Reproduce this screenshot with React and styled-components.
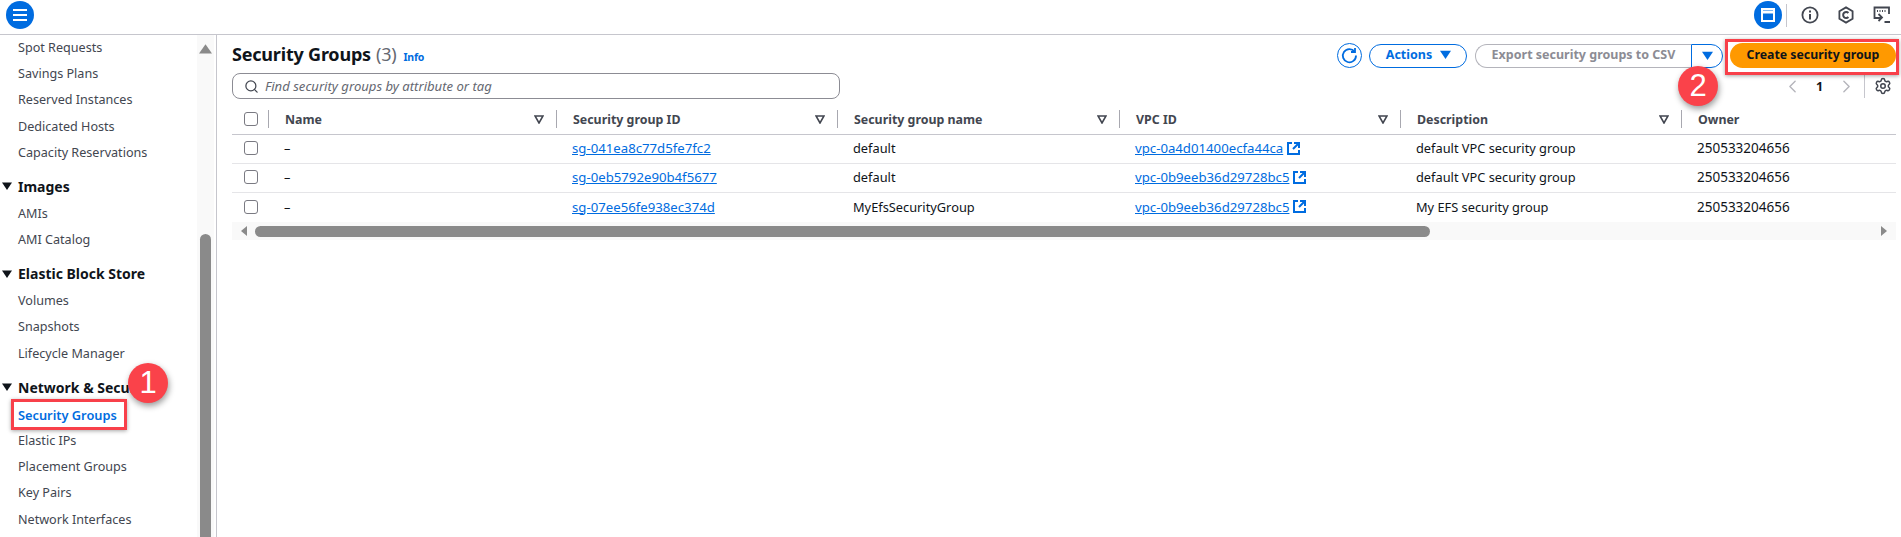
import React from "react";
import styled, { createGlobalStyle } from "styled-components";
import { Settings, Search, ChevronLeft, ChevronRight } from "lucide-react";

const Global = createGlobalStyle`
  html, body { margin: 0; padding: 0; height: 537px; overflow: hidden; background: #fff; }
  body { font-family: "Noto Sans", "Open Sans", sans-serif; font-size: 13px; color: #0f141a; }
  * { box-sizing: border-box; }
`;

const Page = styled.div`
  position: relative;
  width: 1901px;
  height: 537px;
  overflow: hidden;
  display: flex;
  flex-direction: column;
`;

const TopBar = styled.header`
  height: 35px;
  flex: none;
  display: flex;
  align-items: flex-start;
  justify-content: space-between;
  padding: 1px 5px 0 6px;
  border-bottom: 1px solid #c6c6cd;
`;

const RoundButton = styled.button`
  width: 28px;
  height: 28px;
  padding: 0;
  border: none;
  border-radius: 50%;
  background: #006ce0;
  display: flex;
  align-items: center;
  justify-content: center;
  color: #fff;
`;

const TopRight = styled.div`
  display: flex;
  align-items: center;
  height: 28px;
`;

const TopDivider = styled.span`
  width: 1px;
  height: 23px;
  margin: 0 14px 0 4px;
  background: #c6c6cd;
`;

const TopIcon = styled.svg`
  width: 18px;
  height: 18px;
  margin-right: 18px;
  color: #424650;
  fill: none;
  stroke: currentColor;
  stroke-width: 1.8;
  &:last-child { margin-right: 5px; }
`;

const Body = styled.div`
  flex: 1;
  display: flex;
  min-height: 0;
`;

const Sidebar = styled.aside`
  width: 217px;
  flex: none;
  display: flex;
  border-right: 1px solid #c6c6cd;
  overflow: hidden;
`;

const NavList = styled.nav`
  width: 197px;
  flex: none;
  white-space: nowrap;
  overflow: hidden;
`;

const NavItem = styled.div`
  height: 26.2px;
  line-height: 26px;
  padding-left: 18px;
  color: ${(p) => (p.$active ? "#006ce0" : "#424650")};
  font-weight: ${(p) => (p.$active ? 600 : 400)};
  font-size: ${(p) => (p.$active ? 12.8 : 12.6)}px;
`;

const NavHead = styled.div`
  height: 26.2px;
  margin-top: 8.8px;
  padding-bottom: 3px;
  display: flex;
  align-items: center;
  gap: 6px;
  padding-left: 2px;
  font-size: 14px;
  font-weight: 700;
  color: #0f141a;
`;

const Caret = styled.svg`
  flex: none;
  width: ${(p) => p.$size || 10}px;
  height: ${(p) => p.$size || 10}px;
  fill: currentColor;
`;

const VTrack = styled.div`
  position: relative;
  width: 17px;
  flex: none;
  margin-right: 2px;
  background: #f9f9f9;
  display: flex;
  flex-direction: column;
  align-items: center;
  color: #8a8a8a;
  padding-top: 8px;
`;

const VThumb = styled.div`
  width: 11px;
  margin-top: auto;
  height: 303px;
  border-radius: 6px 6px 0 0;
  background: #8a8a8a;
`;

const Main = styled.main`
  flex: 1;
  min-width: 0;
  padding: 8px 5px 0 15px;
  display: flex;
  flex-direction: column;
`;

const HeadRow = styled.div`
  height: 25px;
  display: flex;
  align-items: center;
  justify-content: space-between;
`;

const Title = styled.h1`
  margin: 0;
  padding-bottom: 4px;
  font-size: 18px;
  font-weight: 700;
  letter-spacing: -0.2px;
  color: #0f141a;
  display: flex;
  align-items: baseline;
  gap: 5px;
`;

const Count = styled.span`
  font-weight: 400;
  color: #656871;
`;

const InfoLink = styled.a`
  font-size: 10.5px;
  font-weight: 700;
  margin-left: 2px;
  color: #006ce0;
`;

const Actions = styled.div`
  display: flex;
  align-items: center;
`;

const RefreshButton = styled.button`
  width: 25px;
  height: 25px;
  padding: 0;
  margin-right: 7px;
  background: #fff;
  border: 1.5px solid #006ce0;
  border-radius: 50%;
  color: #006ce0;
  display: flex;
  align-items: center;
  justify-content: center;
`;

const PillButton = styled.button`
  height: 24px;
  padding: 0 0 2px 1px;
  font: 700 12.5px "Noto Sans", sans-serif;
  background: #fff;
  color: #006ce0;
  border: 1.5px solid #006ce0;
  border-radius: 13px;
  display: flex;
  align-items: center;
  gap: 8px;
  width: 98px;
  justify-content: center;
  margin-right: 8px;
`;

const SplitLeft = styled.button`
  width: 216px;
  height: 24px;
  padding: 0 0 2px;
  font: 700 12.5px "Noto Sans", sans-serif;
  color: #8c8c94;
  background: #fff;
  border: 1.5px solid #b4b4bb;
  border-right: none;
  border-radius: 13px 0 0 13px;
`;

const SplitRight = styled.button`
  width: 32px;
  height: 24px;
  padding: 0;
  background: #fff;
  color: #006ce0;
  border: 1.5px solid #006ce0;
  border-radius: 0 13px 13px 0;
  display: flex;
  align-items: center;
  justify-content: center;
  margin-right: 7px;
`;

const PrimaryButton = styled.button`
  width: 166px;
  height: 25px;
  padding: 0 0 2px;
  font: 700 12.3px "Noto Sans", sans-serif;
  color: #0f141a;
  background: #ff9900;
  border: none;
  border-radius: 13px;
`;

const SearchRow = styled.div`
  height: 26px;
  margin-top: 5px;
  display: flex;
  align-items: center;
  justify-content: space-between;
`;

const SearchBox = styled.div`
  width: 608px;
  height: 26px;
  border: 1px solid #8c8c94;
  border-radius: 8px;
  display: flex;
  align-items: center;
  gap: 6px;
  padding-left: 11px;
  color: #424650;
`;

const Placeholder = styled.span`
  font-style: italic;
  font-size: 13.1px;
  color: #656871;
`;

const Pager = styled.div`
  display: flex;
  align-items: center;
  height: 23px;
  color: #b4b4bb;
`;

const PageNumber = styled.span`
  width: 33px;
  text-align: center;
  font-weight: 700;
  font-size: 12.5px;
  color: #0f141a;
`;

const PagerDivider = styled.span`
  width: 1px;
  height: 23px;
  margin: 0 9px 0 7px;
  background: #c6c6cd;
`;

const GearBox = styled.span`
  display: flex;
  color: #424650;
  margin-right: 4px;
`;

const columns = "36px 288px 281px 282px 281px 281px 1fr";

const TableHead = styled.div`
  margin-top: 5px;
  height: 31px;
  display: grid;
  grid-template-columns: ${columns};
  align-items: center;
  border-bottom: 1.5px solid #c6c6cd;
`;

const HeadCell = styled.div`
  height: 18px;
  display: flex;
  align-items: center;
  justify-content: space-between;
  padding: 0 12px 0 16px;
  font-weight: 700;
  font-size: 12.4px;
  color: #424650;
  border-left: 1px solid #a8a8b0;
`;

const Row = styled.div`
  height: 29px;
  display: grid;
  grid-template-columns: ${columns};
  align-items: center;
  padding-bottom: 2px;
  border-bottom: ${(p) => (p.$last ? "none" : "1px solid #e5e5e8")};
`;

const Cell = styled.div`
  padding-left: 16px;
  font-size: 12.8px;
  color: #0f141a;
  white-space: nowrap;
  display: flex;
  align-items: center;
`;

const OwnerCell = styled(Cell)`
  font-size: 13.5px;
`;

const CheckCell = styled.div`
  padding-left: 12px;
  display: flex;
  align-items: center;
`;

const Check = styled.span`
  width: 14px;
  height: 14px;
  border: 1.5px solid #7a7a82;
  border-radius: 3px;
  background: #fff;
`;

const Link = styled.a`
  color: #006ce0;
  text-decoration: underline;
  font-size: 13.2px;
  display: inline-flex;
  align-items: center;
  gap: 4px;
`;

const HScroll = styled.div`
  height: 18px;
  background: #f9f9f9;
  display: flex;
  align-items: center;
  color: #8a8a8a;
  padding: 0 7px;
`;

const HThumb = styled.div`
  width: 1175px;
  height: 11px;
  margin-left: 6px;
  margin-right: auto;
  border-radius: 6px;
  background: #8a8a8a;
`;

const RedBox = styled.div`
  position: absolute;
  left: ${(p) => p.$x}px;
  top: ${(p) => p.$y}px;
  width: ${(p) => p.$w}px;
  height: ${(p) => p.$h}px;
  border: 3px solid #f8404a;
  box-shadow: 0 1px 4px rgba(0, 0, 0, 0.35);
`;

const Badge = styled.div`
  position: absolute;
  left: ${(p) => p.$x}px;
  top: ${(p) => p.$y}px;
  width: 40px;
  height: 40px;
  border-radius: 50%;
  background: #fa424a;
  color: #fff;
  font: 400 31px "Liberation Sans", sans-serif;
  display: flex;
  align-items: center;
  justify-content: center;
  box-shadow: 1px 3px 6px rgba(0, 0, 0, 0.4);
`;

const Tri = ({ dir = "down", size = 10 }) => (
  <Caret viewBox="0 0 10 10" $size={size}>
    {dir === "down" && <path d="M0 1.5h10L5 9z" />}
    {dir === "up" && <path d="M0 8h10L5 1z" />}
    {dir === "left" && <path d="M8 0v10L2 5z" />}
    {dir === "right" && <path d="M2 0v10l6-5z" />}
  </Caret>
);

const FilterIcon = () => (
  <svg width="10" height="9" viewBox="0 0 10 9" fill="none" stroke="#424650" strokeWidth="1.6">
    <path d="M1 1h8L5 8z" />
  </svg>
);

const External = () => (
  <svg width="13" height="13" viewBox="0 0 13 13" fill="none" stroke="#006ce0" strokeWidth="2">
    <path d="M5 1H1v11h11V8" />
    <path d="M7 1h5v5M12 1L6 7" />
  </svg>
);

const nav = [
  ["Spot Requests"], ["Savings Plans"], ["Reserved Instances"], ["Dedicated Hosts"], ["Capacity Reservations"],
  ["Images", "h"], ["AMIs"], ["AMI Catalog"],
  ["Elastic Block Store", "h"], ["Volumes"], ["Snapshots"], ["Lifecycle Manager"],
  ["Network & Security", "h"], ["Security Groups", "a"], ["Elastic IPs"], ["Placement Groups"], ["Key Pairs"], ["Network Interfaces"],
];

const rows = [
  ["sg-041ea8c77d5fe7fc2", "default", "vpc-0a4d01400ecfa44ca", "default VPC security group"],
  ["sg-0eb5792e90b4f5677", "default", "vpc-0b9eeb36d29728bc5", "default VPC security group"],
  ["sg-07ee56fe938ec374d", "MyEfsSecurityGroup", "vpc-0b9eeb36d29728bc5", "My EFS security group"],
];

const heads = ["Name", "Security group ID", "Security group name", "VPC ID", "Description", "Owner"];

export default function App() {
  return (
    <Page>
      <Global />
      <TopBar>
        <RoundButton aria-label="Menu">
          <svg width="14" height="12" viewBox="0 0 14 12" stroke="#fff" strokeWidth="2">
            <path d="M0 1h14M0 6h14M0 11h14" />
          </svg>
        </RoundButton>
        <TopRight>
          <RoundButton aria-label="Panel">
            <svg width="14" height="14" viewBox="0 0 14 14" fill="none" stroke="#fff" strokeWidth="2">
              <rect x="1" y="1" width="12" height="12" />
              <path d="M1 4h12" strokeWidth="3" />
            </svg>
          </RoundButton>
          <TopDivider />
          <TopIcon viewBox="0 0 18 18">
            <circle cx="9" cy="9" r="7.6" />
            <path d="M9 8v5.4M9 4.6v1.8" strokeWidth="2" />
          </TopIcon>
          <TopIcon viewBox="0 0 18 18">
            <path d="M9 1.4l6.6 3.8v7.6L9 16.6l-6.6-3.8V5.2z" />
            <path d="M11.4 7A3 3 0 1 0 11.4 11" strokeWidth="2" />
          </TopIcon>
          <TopIcon viewBox="0 0 18 18">
            <path d="M8 12H1.5V1.5h14.5V8" />
            <path d="M4 5h1M6.5 5h1M9 5h1M11.5 5h1" strokeWidth="2" />
            <path d="M5.5 8l3.5 3.5-3.5 3.5M11.5 16h5.5" />
          </TopIcon>
        </TopRight>
      </TopBar>
      <Body>
        <Sidebar>
          <NavList>
            {nav.map(([label, kind]) =>
              kind === "h" ? (
                <NavHead key={label}>
                  <Tri />
                  {label}
                </NavHead>
              ) : (
                <NavItem key={label} $active={kind === "a"}>
                  {label}
                </NavItem>
              )
            )}
          </NavList>
          <VTrack>
            <Tri dir="up" size={13} />
            <VThumb />
          </VTrack>
        </Sidebar>
        <Main>
          <HeadRow>
            <Title>
              Security Groups <Count>(3)</Count>
              <InfoLink>Info</InfoLink>
            </Title>
            <Actions>
              <RefreshButton aria-label="Refresh">
                <svg width="17" height="17" viewBox="0 0 17 17" fill="none" stroke="currentColor" strokeWidth="1.8">
                  <path d="M13.6 4.6A6.6 6.6 0 1 0 15 8.5" />
                  <path d="M14 1v4h-4" />
                </svg>
              </RefreshButton>
              <PillButton>
                Actions <Tri size={11} />
              </PillButton>
              <SplitLeft>Export security groups to CSV</SplitLeft>
              <SplitRight aria-label="More">
                <Tri size={11} />
              </SplitRight>
              <PrimaryButton>Create security group</PrimaryButton>
            </Actions>
          </HeadRow>
          <SearchRow>
            <SearchBox>
              <Search size={15} strokeWidth={2} />
              <Placeholder>Find security groups by attribute or tag</Placeholder>
            </SearchBox>
            <Pager>
              <ChevronLeft size={21} strokeWidth={1.6} />
              <PageNumber>1</PageNumber>
              <ChevronRight size={21} strokeWidth={1.6} />
              <PagerDivider />
              <GearBox>
                <Settings size={18} strokeWidth={2} />
              </GearBox>
            </Pager>
          </SearchRow>
          <TableHead>
            <CheckCell>
              <Check />
            </CheckCell>
            {heads.map((h, i) => (
              <HeadCell key={h}>
                {h}
                {i < 5 && <FilterIcon />}
              </HeadCell>
            ))}
          </TableHead>
          {rows.map((r, i) => (
            <Row key={r[0]} $last={i === 2}>
              <CheckCell>
                <Check />
              </CheckCell>
              <Cell>–</Cell>
              <Cell>
                <Link>{r[0]}</Link>
              </Cell>
              <Cell>{r[1]}</Cell>
              <Cell>
                <Link>
                  {r[2]} <External />
                </Link>
              </Cell>
              <Cell>{r[3]}</Cell>
              <OwnerCell>250533204656</OwnerCell>
            </Row>
          ))}
          <HScroll>
            <Tri dir="left" size={10} />
            <HThumb />
            <Tri dir="right" size={10} />
          </HScroll>
        </Main>
      </Body>
      <RedBox $x={11} $y={399} $w={116} $h={31} />
      <Badge $x={128} $y={363}>1</Badge>
      <RedBox $x={1725} $y={39} $w={174} $h={36} />
      <Badge $x={1678} $y={66}>2</Badge>
    </Page>
  );
}
